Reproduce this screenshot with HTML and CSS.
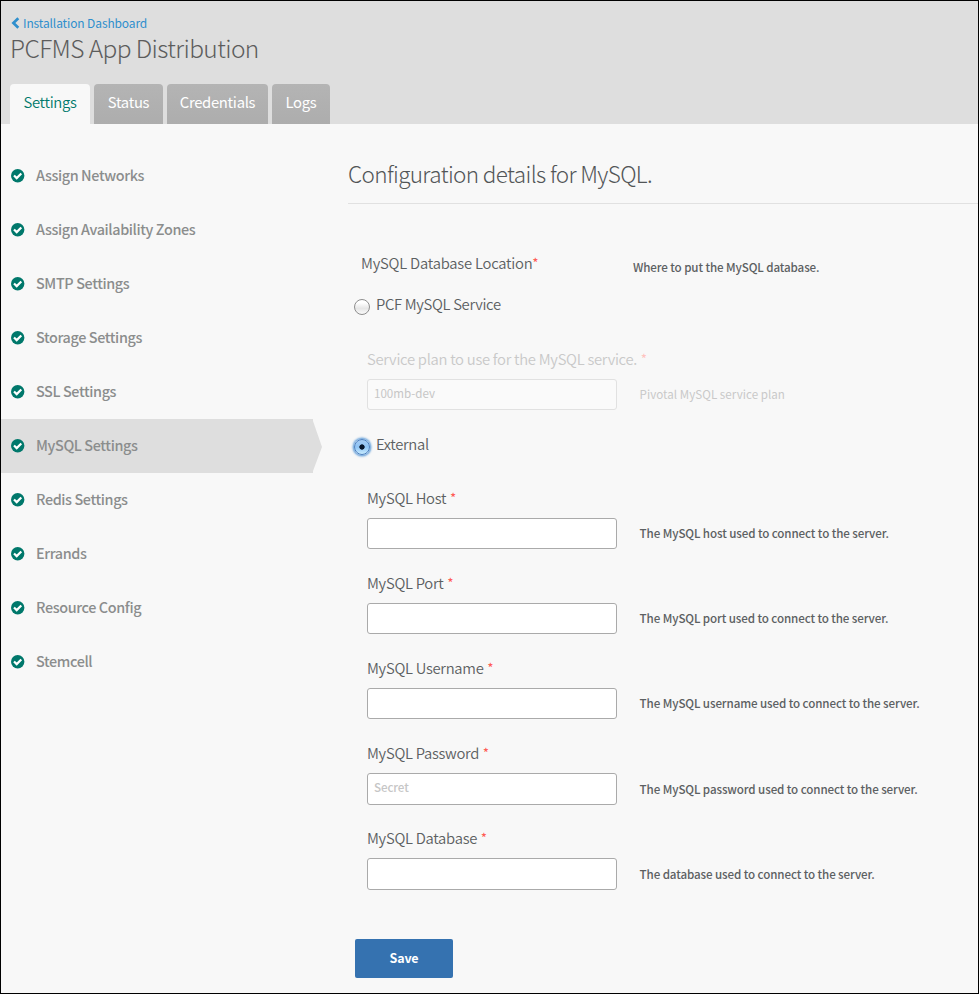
FILE: index.html
```html
<!DOCTYPE html>
<html lang="en">
<head>
<meta charset="utf-8">
<title>PCFMS App Distribution</title>
<link rel="stylesheet" href="styles.css">
</head>
<body>
<svg class="defs" width="0" height="0"><defs>
  <symbol id="check" viewBox="0 0 14 14"><circle cx="6.7" cy="6.7" r="6.7" fill="#00786b"/><path d="M3 6.5l2.7 2.6 4.6-4.6" fill="none" stroke="#fff" stroke-width="2.2"/></symbol>
</defs></svg>
<div class="page">
  <header class="header">
    <a class="back"><svg class="chevron" viewBox="0 0 9 12"><path d="M7.3 1.2L2.4 6l4.9 4.8" fill="none" stroke="#2f8fcd" stroke-width="2.7"/></svg><span>Installation Dashboard</span></a>
    <h1 class="title"><span>PCFMS App Distribution</span></h1>
    <nav class="tabs">
      <a class="tab tab-settings active"><span>Settings</span></a>
      <a class="tab tab-status"><span>Status</span></a>
      <a class="tab tab-credentials"><span>Credentials</span></a>
      <a class="tab tab-logs"><span>Logs</span></a>
    </nav>
  </header>
  <div class="body">
    <ul class="menu">
      <li class="item"><svg class="check"><use href="#check"/></svg><span>Assign Networks</span></li>
      <li class="item"><svg class="check"><use href="#check"/></svg><span>Assign Availability Zones</span></li>
      <li class="item"><svg class="check"><use href="#check"/></svg><span>SMTP Settings</span></li>
      <li class="item"><svg class="check"><use href="#check"/></svg><span>Storage Settings</span></li>
      <li class="item"><svg class="check"><use href="#check"/></svg><span>SSL Settings</span></li>
      <li class="item current"><svg class="check"><use href="#check"/></svg><span>MySQL Settings</span></li>
      <li class="item"><svg class="check"><use href="#check"/></svg><span>Redis Settings</span></li>
      <li class="item"><svg class="check"><use href="#check"/></svg><span>Errands</span></li>
      <li class="item"><svg class="check"><use href="#check"/></svg><span>Resource Config</span></li>
      <li class="item"><svg class="check"><use href="#check"/></svg><span>Stemcell</span></li>
    </ul>
    <main class="content">
      <h2 class="heading"><span>Configuration details for MySQL.</span></h2>
      <div class="location"><div class="label"><span>MySQL Database Location</span><b class="req">*</b></div><div class="desc">Where to put the MySQL database.</div></div>
      <div class="option"><i class="radio"></i><span>PCF MySQL Service</span></div>
      <div class="field disabled">
        <div class="label"><span>Service plan to use for the MySQL service.</span><b class="req">*</b></div>
        <div class="row"><div class="input">100mb-dev</div><div class="desc">Pivotal MySQL service plan</div></div>
      </div>
      <div class="option second"><i class="radio on"></i><span>External</span></div>
      <div class="field">
        <div class="label"><span>MySQL Host</span><b class="req">*</b></div>
        <div class="row"><div class="input"></div><div class="desc">The MySQL host used to connect to the server.</div></div>
      </div>
      <div class="field">
        <div class="label"><span>MySQL Port</span><b class="req">*</b></div>
        <div class="row"><div class="input"></div><div class="desc">The MySQL port used to connect to the server.</div></div>
      </div>
      <div class="field">
        <div class="label"><span>MySQL Username</span><b class="req">*</b></div>
        <div class="row"><div class="input"></div><div class="desc">The MySQL username used to connect to the server.</div></div>
      </div>
      <div class="field">
        <div class="label"><span>MySQL Password</span><b class="req">*</b></div>
        <div class="row"><div class="input tall">Secret</div><div class="desc low">The MySQL password used to connect to the server.</div></div>
      </div>
      <div class="field">
        <div class="label"><span>MySQL Database</span><b class="req">*</b></div>
        <div class="row"><div class="input tall"></div><div class="desc low">The database used to connect to the server.</div></div>
      </div>
      <div class="save">Save</div>
    </main>
  </div>
</div>
</body>
</html>
```
FILE: styles.css
```css
* { box-sizing: border-box; margin: 0; padding: 0; }
body { font-family: "Noto Sans CJK SC", "Noto Sans CJK JP", sans-serif; color: #5c6062; }
.defs { position: absolute; }
.page { width: 979px; height: 994px; border: 1px solid #000; background: #f8f8f8; overflow: hidden; white-space: nowrap; }
.header { height: 123px; background: #dedede; padding: 13px 9px 0; }
.back { display: flex; align-items: center; height: 18px; color: #2f8fcd; font-size: 12px; letter-spacing: -0.12px; line-height: 18px; }
.chevron { width: 9px; height: 12px; margin: 0 3px 0 1px; }
.title { height: 34px; line-height: 32px; font-size: 24.5px; letter-spacing: -0.6px; font-weight: 300; color: #5c5c5c; }
.tabs { display: flex; gap: 4px; margin-top: 18px; }
.tab { height: 40px; line-height: 36px; text-align: center; border-radius: 4px 4px 0 0; background: linear-gradient(#b4b4b4, #adadad); color: #fff; font-size: 14.8px; letter-spacing: -0.3px; }
.tab.active { background: #f8f8f8; color: #00786b; font-weight: 350; }
.tab-settings { width: 80px; }
.tab-status { width: 69px; }
.tab-credentials { width: 101px; }
.tab-logs { width: 58px; }
.body { display: flex; }
.menu { width: 347px; list-style: none; padding-top: 25px; }
.item { width: 321px; height: 54px; padding-left: 10px; display: flex; align-items: center; font-size: 14.4px; letter-spacing: -0.38px; font-weight: 500; line-height: 52px; color: #8b8d8d; }
.item span { height: 54px; }
.item.current { background: #dedede; clip-path: polygon(0 0, 312px 0, 312px 2px, 321px 28px, 312px 52px, 312px 54px, 0 54px); }
.check { width: 14px; height: 14px; margin-right: 11px; }
.content { flex: 1; padding-top: 24px; }
.heading { height: 56px; line-height: 50px; border-bottom: 1px solid #e1e1e1; font-size: 22.5px; letter-spacing: -0.63px; font-weight: 300; color: #525557; }
.label { display: flex; height: 24px; line-height: 24px; font-size: 14.8px; letter-spacing: -0.28px; font-weight: 350; }
.req { color: #ff5d55; font-size: 12px; font-weight: 500; line-height: 22px; }
.desc { font-size: 11.6px; letter-spacing: -0.1px; font-weight: 500; line-height: 18px; }
.location { display: flex; height: 40px; margin: 47px 0 0 13px; }
.location .label { width: 272px; letter-spacing: -0.22px; }
.location .desc { padding-top: 7px; }
.option { display: flex; align-items: center; height: 26px; padding-left: 6px; margin-top: 1px; font-size: 14.8px; letter-spacing: -0.32px; font-weight: 350; }
.option span { line-height: 24px; height: 26px; }
.radio { width: 16px; height: 16px; margin: 4px 6px 0 0; border: 1px solid #8e8e8e; border-radius: 50%; background: linear-gradient(#fff 20%, #e6e6e6 60%, #fafafa); }
.radio.on { border-color: #4a7fc0; background: radial-gradient(circle, #07152c 0 2.3px, transparent 3px) border-box, linear-gradient(#a9ccf2, #8fc4f5 50%, #d0f1ff) border-box; box-shadow: 0 0 2px 1.5px #6ea6dc; }
.field { height: 85px; padding-left: 19px; }
.field .label { gap: 4px; height: 32px; }
.row { display: flex; align-items: flex-start; gap: 22.6px; }
.input { width: 250px; height: 31px; border: 1px solid #aaa; border-radius: 3px; background: #fff; padding: 0 6px; font-size: 11.6px; letter-spacing: -0.1px; font-weight: 500; line-height: 27px; color: #c6c6c6; }
.input.tall { height: 32px; }
.row .desc { padding-top: 6px; }
.row .desc.low { padding-top: 7px; }
.disabled { margin-top: 29px; color: #c9c9c9; }
.disabled .req { color: #ffc4c0; }
.disabled .input { border-color: #e1e1e1; background: #fafafa; font-weight: 400; letter-spacing: 0; }
.disabled .desc { font-weight: 400; letter-spacing: 0.04px; }
.option.second { margin: 0 0 28px; }
.save { width: 98px; height: 39px; margin: 28px 0 0 7px; border-radius: 2px; background: #3572b0; color: #fff; font-size: 12.5px; letter-spacing: -0.2px; font-weight: 700; line-height: 37px; text-align: center; }
```
